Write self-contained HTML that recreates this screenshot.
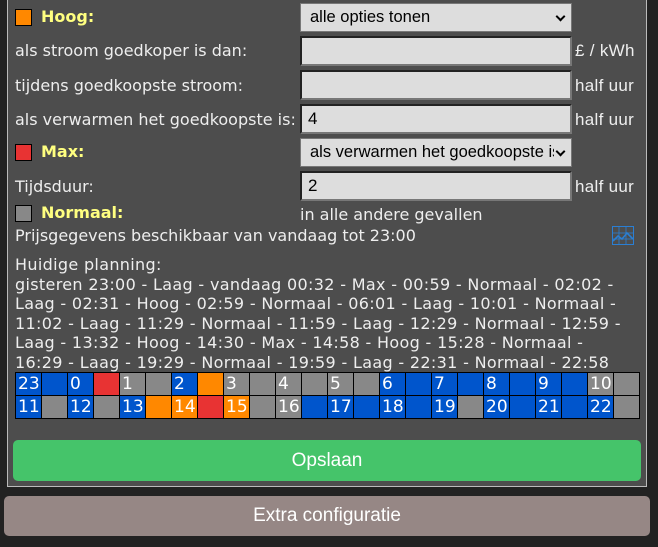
<!DOCTYPE html>
<html><head><style>
body{margin:0;width:658px;height:547px;background:#222;font-family:"DejaVu Sans",Verdana,sans-serif;color:#eee;overflow:hidden;position:relative}
.panel{position:absolute;left:7px;top:-2px;width:638px;height:488px;background:#4d4d4d;border:1px solid #bbb;border-top:none}
.a{position:absolute;white-space:nowrap}
.lbl{font-size:16px;color:#eee}
.y{color:#ffff80;font-weight:bold;font-size:16px}
.sq{position:absolute;width:17px;height:17px;border:1px solid #000;box-sizing:border-box}
.inp{position:absolute;left:300px;width:272px;height:30px;background:#ddd;box-sizing:border-box;border:2px solid #222;border-right-color:#777;border-bottom-color:#777;font:17px "Liberation Sans",sans-serif;color:#000;padding:3px 0 0 6px}
.sel{position:absolute;left:300px;width:272px;height:29px;background:#ddd;box-sizing:border-box;border:1px solid #777;font:16.5px "Liberation Sans",sans-serif;color:#000;padding:4px 0 0 9px;white-space:nowrap}
.sel span{display:block;overflow:hidden;width:244px}
.sel:after{content:"";position:absolute;right:7px;top:9px;width:5px;height:5px;border-right:2px solid #000;border-bottom:2px solid #000;transform:rotate(45deg)}
.unit{position:absolute;left:575px;font:17px "Liberation Sans",sans-serif;color:#eee;letter-spacing:0.3px}
.plan{position:absolute;left:15px;top:255px;font-family:"DejaVu Sans",sans-serif;font-size:16px;letter-spacing:0.33px;line-height:19.6px;color:#eee;white-space:nowrap}
table{position:absolute;left:15px;top:372px;border-collapse:collapse}
td{width:26px;height:23px;border:1px solid #000;padding:0 0 0 2px;font:17px "DejaVu Sans",sans-serif;color:#fff;box-sizing:border-box;line-height:20px}
.b{background:#0055cc}.g{background:#888}.r{background:#e83333}.o{background:#ff8800}
.btn{position:absolute;border-radius:5px;font:19px "Liberation Sans",sans-serif;color:#fff;text-align:center}
</style></head><body>
<div class="panel"></div>
<div class="sq" style="left:15px;top:9px;background:#ff8800"></div><div class="a y" style="left:41px;top:7px">Hoog:</div>
<div class="sel" style="top:3px"><span>alle opties tonen</span></div>
<div class="a lbl" style="left:15px;top:41px">als stroom goedkoper is dan:</div>
<div class="inp" style="top:36px"></div><div class="unit" style="top:41px">£ / kWh</div>
<div class="a lbl" style="left:15px;top:76px">tijdens goedkoopste stroom:</div>
<div class="inp" style="top:70px"></div><div class="unit" style="top:76px">half uur</div>
<div class="a lbl" style="left:15px;top:110px">als verwarmen het goedkoopste is:</div>
<div class="inp" style="top:104px">4</div><div class="unit" style="top:110px">half uur</div>
<div class="sq" style="left:15px;top:144px;background:#e83333"></div><div class="a y" style="left:41px;top:142px">Max:</div>
<div class="sel" style="top:138px"><span>als verwarmen het goedkoopste is</span></div>
<div class="a lbl" style="left:15px;top:177px">Tijdsduur:</div>
<div class="inp" style="top:171px">2</div><div class="unit" style="top:177px">half uur</div>
<div class="sq" style="left:15px;top:205px;background:#888"></div><div class="a y" style="left:41px;top:203px">Normaal:</div>
<div class="a lbl" style="left:300px;top:205px">in alle andere gevallen</div>
<div class="a lbl" style="left:15px;top:226px">Prijsgegevens beschikbaar van vandaag tot 23:00</div>
<svg class="a" style="left:612px;top:226px" width="22" height="19" viewBox="0 0 22 19"><rect x="0.5" y="0.5" width="21" height="18" fill="none" stroke="#2a7fd4"/><path d="M0 7H22M0 13H22M7 0V19M14 0V19" stroke="#2a7fd4" stroke-width="0.8"/><path d="M1 15L6 10L10 13L15 7L21 13" fill="none" stroke="#2a7fd4" stroke-width="1.6"/></svg>
<div class="plan">Huidige planning:<br>gisteren 23:00 - Laag - vandaag 00:32 - Max - 00:59 - Normaal - 02:02 -<br>Laag - 02:31 - Hoog - 02:59 - Normaal - 06:01 - Laag - 10:01 - Normaal -<br>11:02 - Laag - 11:29 - Normaal - 11:59 - Laag - 12:29 - Normaal - 12:59 -<br>Laag - 13:32 - Hoog - 14:30 - Max - 14:58 - Hoog - 15:28 - Normaal -<br>16:29 - Laag - 19:29 - Normaal - 19:59 - Laag - 22:31 - Normaal - 22:58</div>
<table>
<tr><td class="b">23</td><td class="b"></td><td class="b">0</td><td class="r"></td><td class="g">1</td><td class="g"></td><td class="b">2</td><td class="o"></td><td class="g">3</td><td class="g"></td><td class="g">4</td><td class="g"></td><td class="g">5</td><td class="g"></td><td class="b">6</td><td class="b"></td><td class="b">7</td><td class="b"></td><td class="b">8</td><td class="b"></td><td class="b">9</td><td class="b"></td><td class="g">10</td><td class="g"></td></tr>
<tr><td class="b">11</td><td class="g"></td><td class="b">12</td><td class="g"></td><td class="b">13</td><td class="o"></td><td class="o">14</td><td class="r"></td><td class="o">15</td><td class="g"></td><td class="g">16</td><td class="b"></td><td class="b">17</td><td class="b"></td><td class="b">18</td><td class="b"></td><td class="b">19</td><td class="g"></td><td class="b">20</td><td class="b"></td><td class="b">21</td><td class="b"></td><td class="b">22</td><td class="g"></td></tr>
</table>
<div class="btn" style="left:13px;top:440px;width:628px;height:41px;line-height:41px;background:#45c46a">Opslaan</div>
<div class="btn" style="left:4px;top:496px;width:646px;height:40px;line-height:40px;background:#968785">Extra configuratie</div>
</body></html>
